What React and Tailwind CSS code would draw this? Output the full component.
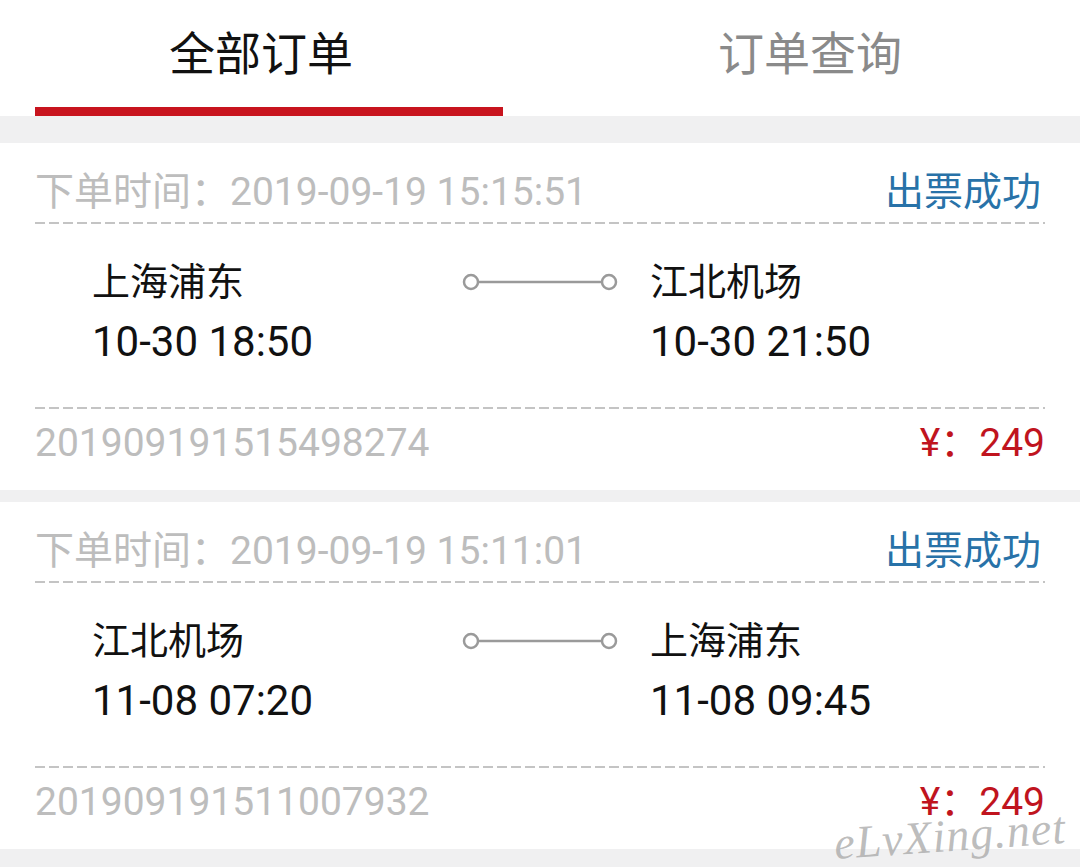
import React from 'react';

const orders = [
  {
    time: '2019-09-19 15:15:51',
    status: '出票成功',
    from: { city: '上海浦东', at: '10-30 18:50' },
    to: { city: '江北机场', at: '10-30 21:50' },
    no: '201909191515498274',
    price: '249',
  },
  {
    time: '2019-09-19 15:11:01',
    status: '出票成功',
    from: { city: '江北机场', at: '11-08 07:20' },
    to: { city: '上海浦东', at: '11-08 09:45' },
    no: '201909191511007932',
    price: '249',
  },
];

const Dashed = () => (
  <div className="h-[2px] w-full bg-[repeating-linear-gradient(90deg,#c4c4c4_0_10px,transparent_10px_14px)]" />
);

const Connector = () => (
  <svg width="160" height="20" viewBox="0 0 160 20" className="shrink-0">
    <line x1="17" y1="10" x2="139" y2="10" stroke="#9a9a9a" strokeWidth="2.5" />
    <circle cx="9" cy="10" r="7" fill="#fff" stroke="#9a9a9a" strokeWidth="2.5" />
    <circle cx="147" cy="10" r="7" fill="#fff" stroke="#9a9a9a" strokeWidth="2.5" />
  </svg>
);

const OrderCard = ({ order }) => (
  <div className="bg-white px-[35px]">
    <div className="flex items-center justify-between pt-[29px] pb-[10px] text-[39px] leading-[40px]">
      <span className="text-[#bdbdbd]">下单时间：{order.time}</span>
      <span className="pr-[4px] text-[#2872a8]">{order.status}</span>
    </div>
    <Dashed />
    <div className="flex pl-[57px] pt-[33px] pb-[40px]">
      <div className="w-[370px] text-[#111]">
        <div className="text-[38px] leading-[50px]">{order.from.city}</div>
        <div className="mt-[10px] text-[42px] leading-[50px]">{order.from.at}</div>
      </div>
      <div className="flex h-[50px] items-center">
        <Connector />
      </div>
      <div className="pl-[28px] text-[#111]">
        <div className="text-[38px] leading-[50px]">{order.to.city}</div>
        <div className="mt-[10px] text-[42px] leading-[50px]">{order.to.at}</div>
      </div>
    </div>
    <Dashed />
    <div className="flex items-center justify-between pt-[14px] pb-[27px] text-[39px] leading-[40px]">
      <span className="text-[#bdbdbd]">{order.no}</span>
      <span className="text-[#c0141e]">¥：{order.price}</span>
    </div>
  </div>
);

export default function App() {
  return (
    <div className="relative h-[867px] w-[1080px] overflow-hidden bg-[#f0f0f1] font-['Roboto','Noto_Sans_CJK_SC',sans-serif]">
      <div className="bg-white">
        <div className="flex h-[107px] items-center">
          <div className="flex w-1/2 justify-center pr-[18px] pt-[2px] text-[46px] text-[#111]">全部订单</div>
          <div className="flex w-1/2 justify-center pt-[2px] text-[46px] text-[#8a8a8a]">订单查询</div>
        </div>
        <div className="flex h-[9px]">
          <div className="ml-[35px] w-[468px] bg-[#c8141e]" />
        </div>
      </div>
      <div className="flex flex-col gap-[12px] pt-[27px]">
        {orders.map((o) => (
          <OrderCard key={o.no} order={o} />
        ))}
      </div>
      <div className="pointer-events-none absolute bottom-[8px] right-[14px] -rotate-[4deg] font-['Liberation_Serif',serif] text-[46px] italic leading-none tracking-[1px] text-[#a0a0a0]/70">
        eLvXing.net
      </div>
    </div>
  );
}
